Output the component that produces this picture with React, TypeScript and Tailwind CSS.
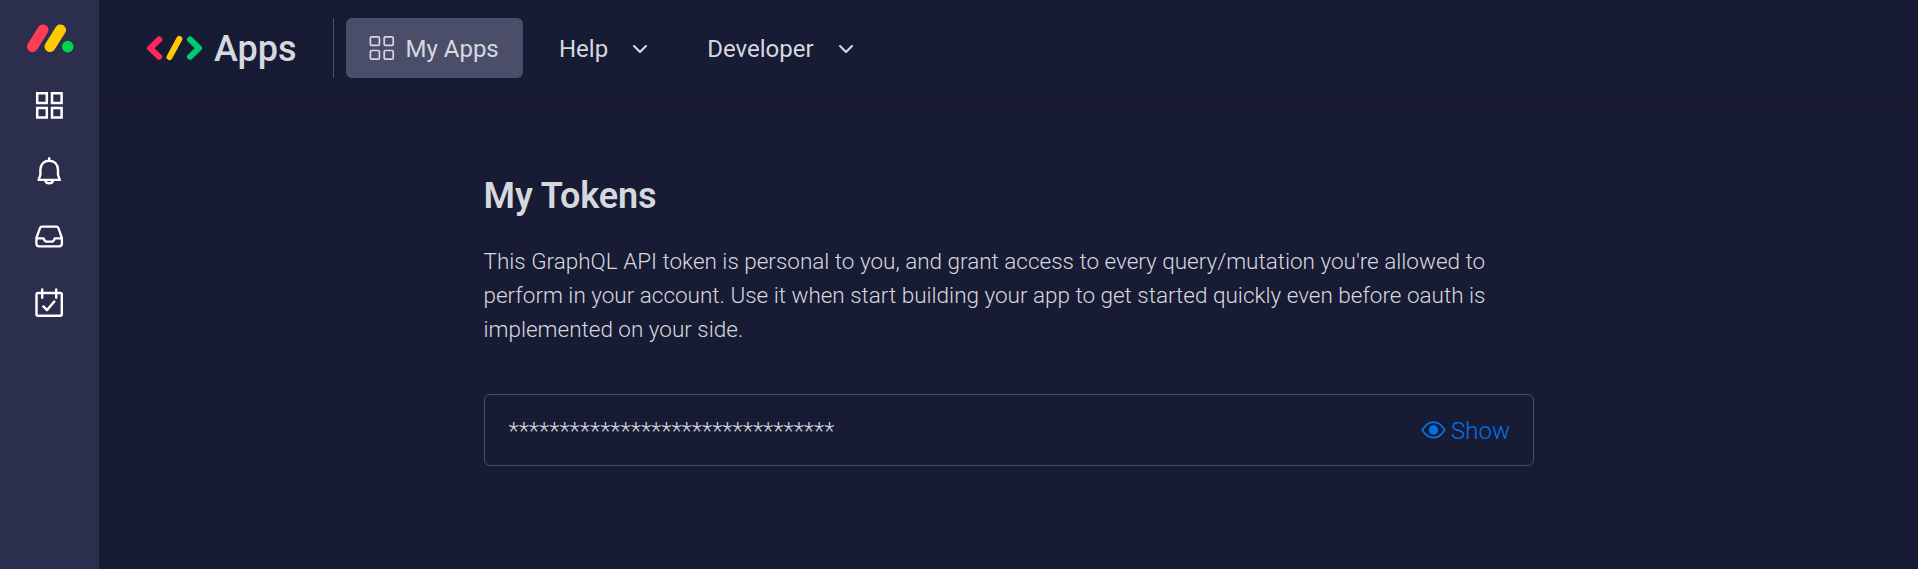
import type { ReactNode } from "react";

function SideIcon({ children }: { children: ReactNode }) {
  return (
    <svg className="h-8 w-8 overflow-visible" viewBox="0 0 32 32" fill="none" stroke="#fff" strokeWidth="2" strokeLinecap="round" strokeLinejoin="round">
      {children}
    </svg>
  );
}

function Sidebar() {
  return (
    <aside className="z-10 flex w-[99px] shrink-0 flex-col items-center bg-[#2b2e4c] pt-[22px] pr-[2px]">
      <svg className="ml-[2px] h-[32px] w-[48px]" viewBox="0 0 48 32" fill="none" strokeLinecap="round">
        <path d="M6.500 24.600 17 7.900" stroke="#ff3d57" strokeWidth="11" />
        <path d="M24 24.600 34.500 7.900" stroke="#ffcb00" strokeWidth="11" />
        <circle cx="41.700" cy="24.600" r="5.800" fill="#00d647" />
      </svg>
      <div className="mt-[34px] flex flex-col gap-[34px]">
        <SideIcon>
          <path strokeWidth="2.500" strokeLinejoin="miter" d="M4.200 5.300h9.600V15H4.200zM19 5.300h9.600V15H19zM4.200 19.900h9.600v9.700H4.200zM19 19.900h9.600v9.700H19z" />
        </SideIcon>
        <SideIcon>
          <path strokeWidth="2.400" d="M16.200 4.200v2.500M16.200 6.700c-5.300 0-8.800 3.800-8.800 9v5.200l-1.800 5h21.200l-1.800-5v-5.200c0-5.200-3.500-9-8.800-9zM12.300 26.600c.5 1.700 2 2.700 3.900 2.700s3.400-1 3.900-2.700" />
        </SideIcon>
        <SideIcon>
          <path strokeWidth="2.300" d="M9 6.600h14.400c1 0 1.700.5 2 1.400l3.500 10v5.500c0 1.600-1 2.800-2.800 2.800H6.200c-1.800 0-2.800-1.200-2.800-2.800V18L7 8c.3-.9 1-1.400 2-1.400zM3.500 18.300h7.200c.5 2.400 1 3.300 2.800 3.300h5.300c1.800 0 2.400-.9 2.900-3.300h7.200" />
        </SideIcon>
        <SideIcon>
          <path strokeWidth="2.400" d="M5 7h22.300c1 0 1.500.5 1.500 1.500v19.800c0 1-.5 1.500-1.500 1.500H5c-1 0-1.500-.5-1.500-1.500V8.500C3.500 7.500 4 7 5 7zM9.200 3.500v8.200M23.200 3.500v8.200M10.300 20.400l3.700 3.700 7.300-8.600" />
        </SideIcon>
      </div>
    </aside>
  );
}

function Chevron() {
  return (
    <svg className="h-[10px] w-[16px]" viewBox="0 0 16 10" fill="none" stroke="#d5d8df" strokeWidth="2.100" strokeLinecap="round" strokeLinejoin="round">
      <path d="M2 2l6 6 6-6" />
    </svg>
  );
}

function Header() {
  return (
    <header className="flex h-24 shrink-0 items-center bg-[#181b34] pl-[47px] text-2xl text-[#d5d8df] shadow-[0_6px_12px_rgba(28,26,44,0.6)]">
      <svg className="h-[26px] w-[58px]" viewBox="0 0 58 26" fill="none" strokeWidth="6" strokeLinecap="round" strokeLinejoin="round">
        <path d="M13.200 4.500 4.200 13.200l9 8.600" stroke="#ff275e" />
        <path d="M23.500 22.100 33.300 4" stroke="#ffcb00" />
        <path d="M44 4.500l9 8.700-9 8.600" stroke="#00ca72" />
      </svg>
      <span className="ml-[10px] w-[118px] pt-[2px] text-[36px] leading-[60px] font-medium">Apps</span>
      <div className="ml-px h-[60px] w-px bg-[#4b4e69]" />
      <button className="ml-3 flex h-[60px] w-[177px] items-center rounded-md bg-[#4b4e69] pl-[23px]">
        <svg className="h-[26px] w-[26px]" viewBox="0 0 26 26" fill="none" stroke="#d5d8df" strokeWidth="1.700">
          <rect x="1.400" y="1.800" width="9" height="8.600" rx="1.200" />
          <rect x="15.200" y="1.800" width="9" height="8.600" rx="1.200" />
          <rect x="1.400" y="15.500" width="9" height="8.600" rx="1.200" />
          <rect x="15.200" y="15.500" width="9" height="8.600" rx="1.200" />
        </svg>
        <span className="ml-[10.5px] pt-[2px] whitespace-nowrap">My Apps</span>
      </button>
      <button className="ml-9 flex items-center">
        <span className="pt-[2px]">Help</span>
        <span className="ml-6 pt-[2px]"><Chevron /></span>
      </button>
      <button className="ml-[59px] flex items-center">
        <span className="pt-[2px]">Developer</span>
        <span className="ml-6 pt-[2px]"><Chevron /></span>
      </button>
    </header>
  );
}

export default function App() {
  return (
    <div className="flex h-[569px] overflow-hidden bg-[#181b34] font-['Roboto',sans-serif] text-[#d5d8df]">
      <Sidebar />
      <div className="flex min-w-0 flex-1 flex-col">
        <Header />
        <main className="ml-[384.500px] w-[1050.500px] pt-[76px]">
          <h1 className="text-[36px] leading-[48px] font-semibold tracking-[-0.1px]">My Tokens</h1>
          <p className="mt-[24px] w-[1020px] text-[22.500px] leading-[34px] font-light tracking-[-0.01px]">
            This GraphQL API token is personal to you, and grant access to every query/mutation you're allowed to
            perform in your account. Use it when start building your app to get started quickly even before oauth is
            implemented on your side.
          </p>
          <div className="mt-[48px] flex h-[72px] items-center justify-between rounded-md border border-[#4b4e69] pt-px pr-[23px] pl-6 text-2xl font-light">
            <span>********************************</span>
            <button className="flex items-center gap-[5px] text-[#0073ea]">
              <svg className="mb-px h-[20px] w-[25px]" viewBox="0 0 25 20" fill="none" stroke="currentColor" strokeWidth="1.700" strokeLinejoin="round">
                <path d="M1.200 10C4 5.500 8 2.100 12.500 2.100S21 5.500 23.800 10C21 14.500 17 17.700 12.500 17.700S4 14.500 1.200 10z" />
                <circle cx="12.500" cy="10" r="4.700" fill="currentColor" stroke="none" />
              </svg>
              <span>Show</span>
            </button>
          </div>
        </main>
      </div>
    </div>
  );
}
